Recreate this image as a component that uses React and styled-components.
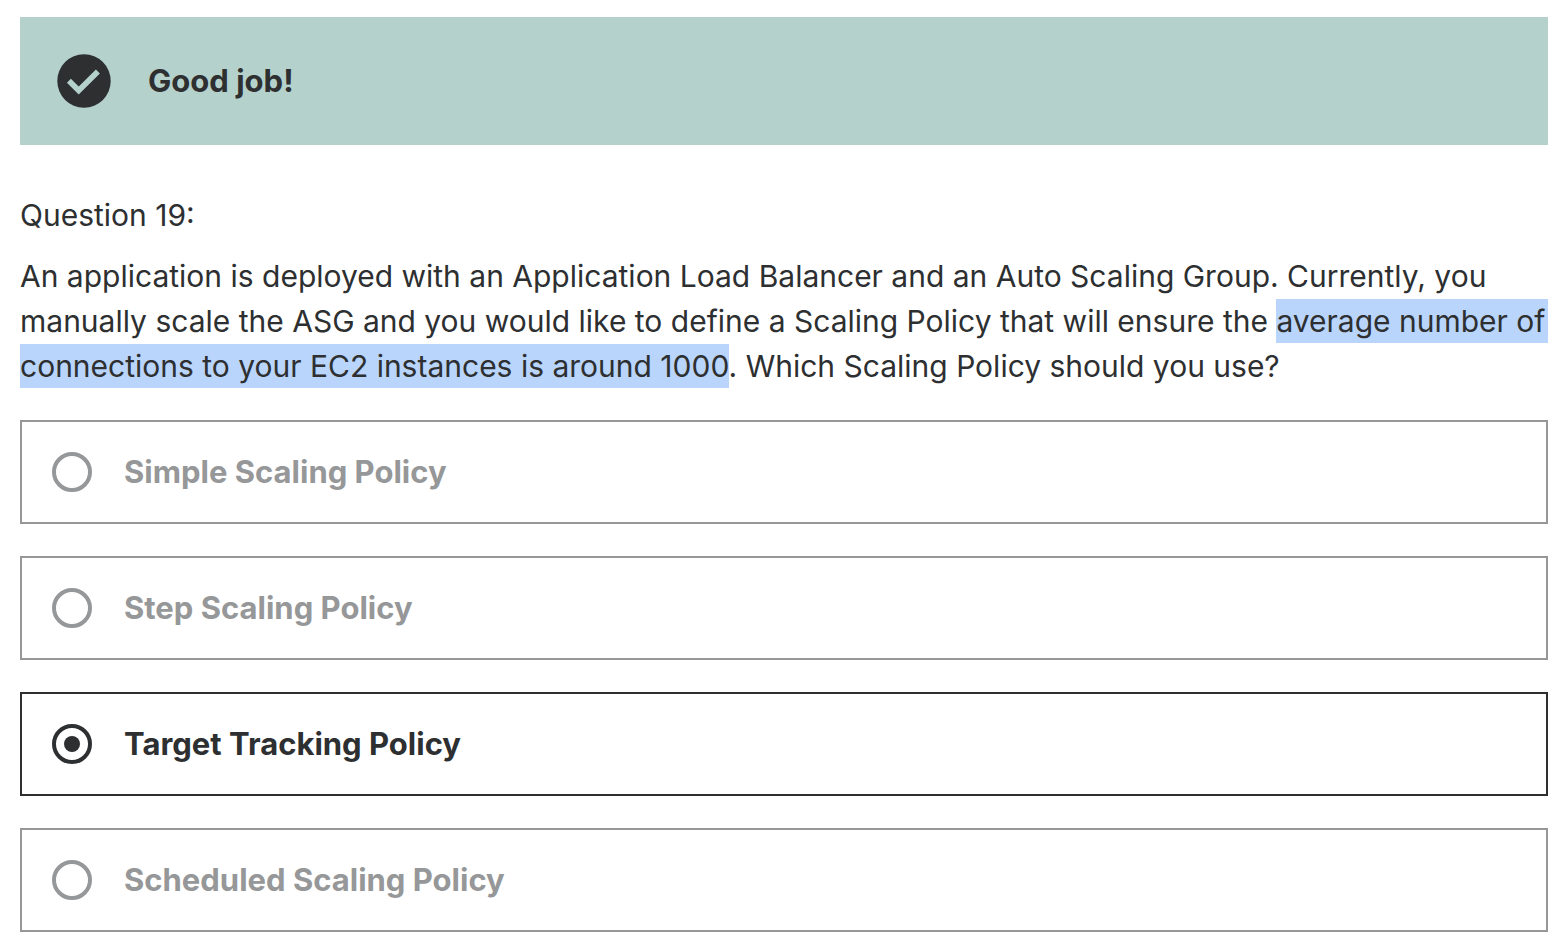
import React, { useState } from "react";
import styled, { createGlobalStyle } from "styled-components";

const Global = createGlobalStyle`
  * { box-sizing: border-box; }
  body { margin: 0; background: #fff; color: #2d2f31; font-family: Inter, "Liberation Sans", sans-serif; }
`;

const Page = styled.main`
  padding: 17px 10px 18px 20px;
`;

const Banner = styled.div`
  display: flex;
  align-items: center;
  gap: 36px;
  padding: 36px;
  background: #b5d1cc;
  font-size: 31px;
  font-weight: 700;
  line-height: 44px;
`;

const CheckIcon = styled.svg`
  width: 56px;
  height: 56px;
  flex: none;
`;

const QuestionForm = styled.form`
  padding-top: 48px;
`;

const QuestionNumber = styled.div`
  font-size: 30px;
  line-height: 45px;
`;

const Prompt = styled.p`
  margin: 16px 0 31px;
  overflow-x: clip;
  font-size: 30px;
  line-height: 45px;
`;

const Highlight = styled.mark`
  padding: 4px 0;
  background: #b9d5fb;
  color: inherit;
  white-space: pre-wrap;
`;

const Answers = styled.div`
  display: flex;
  flex-direction: column;
  gap: 32px;
`;

const Answer = styled.label`
  display: flex;
  align-items: center;
  gap: 32px;
  padding: 28px 30px;
  border: 2px solid currentColor;
  color: ${(p) => (p.$selected ? "#2d2f31" : "#969798")};
  font-size: 31px;
  font-weight: 700;
  line-height: 44px;
`;

const Radio = styled.input`
  appearance: none;
  display: grid;
  place-items: center;
  flex: none;
  width: 40px;
  height: 40px;
  margin: 0;
  border: 4px solid currentColor;
  border-radius: 50%;
  color: inherit;

  &:checked::before {
    content: "";
    width: 16px;
    height: 16px;
    border-radius: 50%;
    background: currentColor;
  }
`;

const options = [
  "Simple Scaling Policy",
  "Step Scaling Policy",
  "Target Tracking Policy",
  "Scheduled Scaling Policy",
];

export default function App() {
  const [selected, setSelected] = useState(2);
  return (
    <Page>
      <Global />
      <Banner role="status">
        <CheckIcon viewBox="0 0 56 56" aria-hidden="true">
          <circle cx="28" cy="28" r="26.7" fill="#2d2f31" />
          <path d="M12.9 27.8 22.7 37.6 41.9 18.4" fill="none" stroke="#b5d1cc" strokeWidth="5.6" />
        </CheckIcon>
        <span>Good job!</span>
      </Banner>
      <QuestionForm>
        <QuestionNumber>Question 19:</QuestionNumber>
        <Prompt>
          An application is deployed with an Application Load Balancer and an Auto Scaling Group. Currently, you
          manually scale the ASG and you would like to define a Scaling Policy that will ensure the{" "}
          <Highlight>average number of connections to your EC2 instances is around 1000</Highlight>. Which Scaling
          Policy should you use?
        </Prompt>
        <Answers role="radiogroup" aria-label="Question 19">
          {options.map((text, i) => (
            <Answer key={text} $selected={i === selected}>
              <Radio type="radio" name="answer" checked={i === selected} onChange={() => setSelected(i)} />
              <span>{text}</span>
            </Answer>
          ))}
        </Answers>
      </QuestionForm>
    </Page>
  );
}
